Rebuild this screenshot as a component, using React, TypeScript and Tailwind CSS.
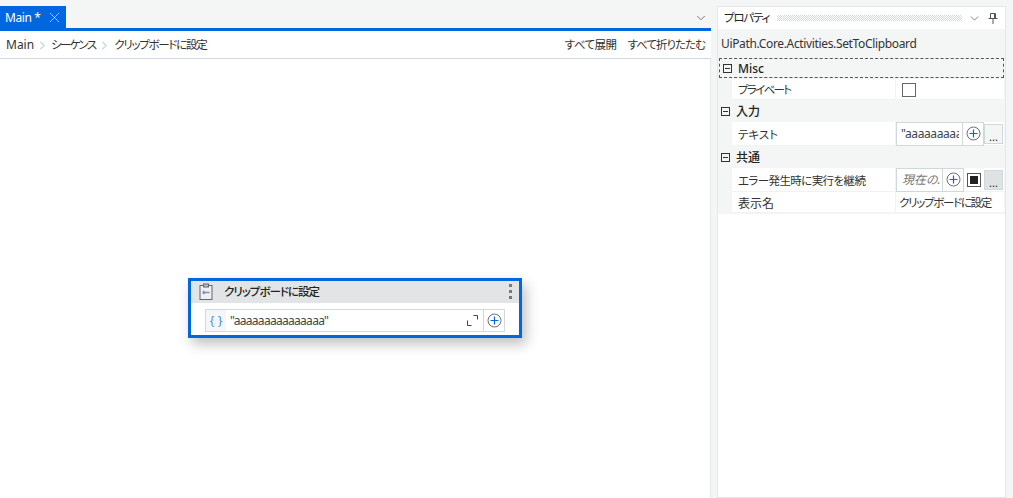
import React from 'react';
import { ChevronDown, ChevronRight, X } from 'lucide-react';

function PlusCircle({ size = 15 }: { size?: number }) {
  return (
    <svg width={size} height={size} viewBox="0 0 15 15" fill="none">
      <circle cx="7.5" cy="7.5" r="6.5" stroke="#6b6f72" strokeWidth="1" />
      <path d="M7.5 3.5v8M3.5 7.5h8" stroke="#0067df" strokeWidth="1.2" />
    </svg>
  );
}

function Category({ label, h, dashed }: { label: string; h: string; dashed?: boolean }) {
  return (
    <div className={`flex items-center ${h} pl-[3px] ${dashed ? 'border border-dashed border-[#555] ml-px mr-px pl-[2px]' : ''}`}>
      <div className="w-[9px] h-[9px] border border-[#333] flex items-center justify-center">
        <div className="w-[5px] h-px bg-[#333]" />
      </div>
      <span className="ml-[6px] pt-[2px] text-[12px] font-medium text-[#222]">{label}</span>
    </div>
  );
}

function Row({ label, h, labelClass, children }: { label: string; h: string; labelClass: string; children: React.ReactNode }) {
  return (
    <div className={`flex ml-[14px] mr-px bg-white border-b border-[#f1f3f3] ${h}`}>
      <div className={`w-[164px] pl-[6px] flex items-center text-[#333] border-r border-[#f1f3f3] shrink-0 ${labelClass}`}>
        {label}
      </div>
      <div className="flex-1 flex items-center min-w-0">{children}</div>
    </div>
  );
}

function Ellipsis({ disabled }: { disabled?: boolean }) {
  return (
    <div className={`w-[19px] h-[20px] ml-auto mr-px border border-[#cfd8dc] flex items-center justify-center text-[11px] leading-none pt-[5px] text-[#222] shrink-0 ${disabled ? 'bg-[#dfe2e3]' : 'bg-[#f4f6f6]'}`}>
      ...
    </div>
  );
}

export default function App() {
  return (
    <div className='font-["Noto_Sans","Noto_Sans_CJK_JP",sans-serif] [font-feature-settings:"palt"] w-[1013px] h-[498px] bg-[#f4f6f6] flex overflow-hidden'>
      {/* Designer */}
      <div className="w-[711px] h-full flex flex-col shrink-0">
        <div className="h-[28px] flex items-end justify-between shrink-0">
          <div className="w-[66px] h-[22px] bg-[#0067df] text-white text-[12px] tracking-[-0.4px] flex items-center pl-[5px]">
            <span className="pt-px">Main *</span>
            <X size={17} strokeWidth={1.1} className="ml-[6px] text-[#cfe3fb]" />
          </div>
          <ChevronDown size={14} strokeWidth={1.5} className="text-[#666] mb-[3px] mr-[3px]" />
        </div>
        <div className="h-[3px] bg-[#0067df] shrink-0" />
        <div className="h-[28px] bg-white border-b border-[#cfd8dc] flex items-center justify-between pl-[6px] pr-[6px] pt-[1px] text-[11.5px] text-[#333] shrink-0">
          <div className="flex items-center">
            <span className="text-[12px]">Main</span>
            <ChevronRight size={13} strokeWidth={3} className="ml-[2px] mr-[2px] text-[#d3d9dc]" />
            <span className="tracking-[-1.7px]">シーケンス</span>
            <ChevronRight size={13} strokeWidth={3} className="ml-[3px] mr-[3px] text-[#d3d9dc]" />
            <span className="tracking-[-1.3px]">クリップボードに設定</span>
          </div>
          <div className="flex items-center gap-[11px]">
            <span className="tracking-[-0.5px]">すべて展開</span>
            <span className="tracking-[-1px]">すべて折りたたむ</span>
          </div>
        </div>
        <div className="relative flex-1 bg-white border-r border-[#e3e7e8]">
          {/* Activity node on the canvas */}
          <div className="absolute left-[188px] top-[219px] w-[334px] h-[60px] bg-white border-[3px] border-[#0067df] shadow-[4px_6px_12px_rgba(0,0,0,0.25)]">
            <div className="h-[22px] bg-[#e3e4e6] flex items-center relative">
              <svg width="15" height="18" viewBox="0 0 15 18" fill="none" className="ml-[8px]">
                <rect x="1" y="2.5" width="12" height="14" stroke="#666" fill="#eef0f2" />
                <rect x="4.5" y="1" width="5" height="3" fill="#bbb" stroke="#666" />
                <path d="M3.5 9.5h7M3.5 9.5l2-1.5M3.5 9.5l2 1.5" stroke="#7d8fc4" strokeWidth="1.4" />
              </svg>
              <span className="ml-[10px] text-[11.5px] tracking-[-1px] font-medium text-[#222]">クリップボードに設定</span>
              <div className="absolute right-[7px] top-[3px] flex flex-col gap-[3px]">
                <div className="w-[3px] h-[3px] bg-[#777]" />
                <div className="w-[3px] h-[3px] bg-[#777]" />
                <div className="w-[3px] h-[3px] bg-[#777]" />
              </div>
            </div>
            <div className="ml-[14px] mt-[6px] w-[300px] h-[23px] border border-[#cfd8dc] flex items-center">
              <div className="w-[20px] h-full bg-[#f4f6f8] text-[#0067df] text-[13px] font-light flex items-center justify-center">{'{ }'}</div>
              <span className="ml-[4px] text-[12px] tracking-[-0.7px] text-[#3c4650]">"aaaaaaaaaaaaaaa"</span>
              <svg width="11" height="11" viewBox="0 0 11 11" fill="none" className="ml-auto mr-[5px]">
                <path d="M.5 5.5v5h4M6.5.5h4v4" stroke="#444" />
              </svg>
              <div className="w-[21px] h-full border-l border-[#cfd8dc] flex items-center justify-center">
                <PlusCircle size={15} />
              </div>
            </div>
          </div>
        </div>
      </div>

      {/* Properties */}
      <div className="ml-[6px] mt-[6px] w-[289px] border border-[#e3e7e8] bg-white flex flex-col self-stretch">
        <div className="h-[22px] bg-white flex items-center pl-[6px] shrink-0">
          <span className="w-[44px] text-[11.5px] tracking-[-1.2px] text-[#222] whitespace-nowrap shrink-0">プロパティ</span>
          <div className="ml-[9px] w-[185px] h-[6px] shrink-0 bg-[conic-gradient(#d6dadc_25%,transparent_0_50%,#d6dadc_0_75%,transparent_0)] bg-[length:2px_2px]" />
          <ChevronDown size={13} strokeWidth={1.5} className="ml-[6px] text-[#666] shrink-0" />
          <svg width="10" height="12" viewBox="0 0 10 12" fill="none" className="ml-[7px] shrink-0">
            <path d="M2.5 1.5h5v5h-5zM.5 6.5h9M5 7v5M6.5 1.5v5" stroke="#555" />
          </svg>
        </div>
        <div className="bg-[#f4f6f6] pb-px">
          <div className="h-[29px] flex items-center pl-[3px] text-[12px] tracking-[-0.35px] text-[#333]">UiPath.Core.Activities.SetToClipboard</div>
          <Category label="Misc" h="h-[20px]" dashed />
          <Row label="プライベート" h="h-[21px] mt-px pt-[1px]" labelClass="text-[11.5px] tracking-[-1.7px]">
            <div className="ml-[6px] w-[14px] h-[14px] border border-[#666] bg-white" />
          </Row>
          <Category label="入力" h="h-[22px]" />
          <Row label="テキスト" h="h-[24px]" labelClass="text-[11.5px] pt-[2px]">
            <div className="w-[88px] h-[24px] border border-[#cfd8dc] flex items-center shrink-0">
              <div className="w-[58px] ml-[4px] mr-[3px] overflow-hidden whitespace-nowrap text-[12px] tracking-[-0.4px] text-[#3c4650]">"aaaaaaaaa</div>
              <div className="w-[21px] h-full border-l border-[#cfd8dc] flex items-center justify-center shrink-0">
                <PlusCircle size={15} />
              </div>
            </div>
            <Ellipsis />
          </Row>
          <Category label="共通" h="h-[22px]" />
          <Row label="エラー発生時に実行を継続" h="h-[24px]" labelClass="text-[11.5px] tracking-[-0.6px] pt-[2px]">
            <div className="w-[68px] h-[24px] border border-[#cfd8dc] flex items-center shrink-0">
              <span className="w-[46px] pl-[5px] overflow-hidden whitespace-nowrap text-[12px] italic text-[#777]">現在の.</span>
              <div className="w-[21px] h-full border-l border-[#cfd8dc] flex items-center justify-center shrink-0">
                <PlusCircle size={15} />
              </div>
            </div>
            <div className="ml-[3px] w-[14px] h-[14px] border border-[#555] flex items-center justify-center shrink-0">
              <div className="w-[8px] h-[8px] bg-[#222]" />
            </div>
            <Ellipsis disabled />
          </Row>
          <Row label="表示名" h="h-[21px]" labelClass="text-[12px] pt-[3px]">
            <span className="pl-[3px] pt-[2px] text-[11.5px] tracking-[-1.3px] text-[#333] whitespace-nowrap">クリップボードに設定</span>
          </Row>
        </div>
      </div>
    </div>
  );
}
